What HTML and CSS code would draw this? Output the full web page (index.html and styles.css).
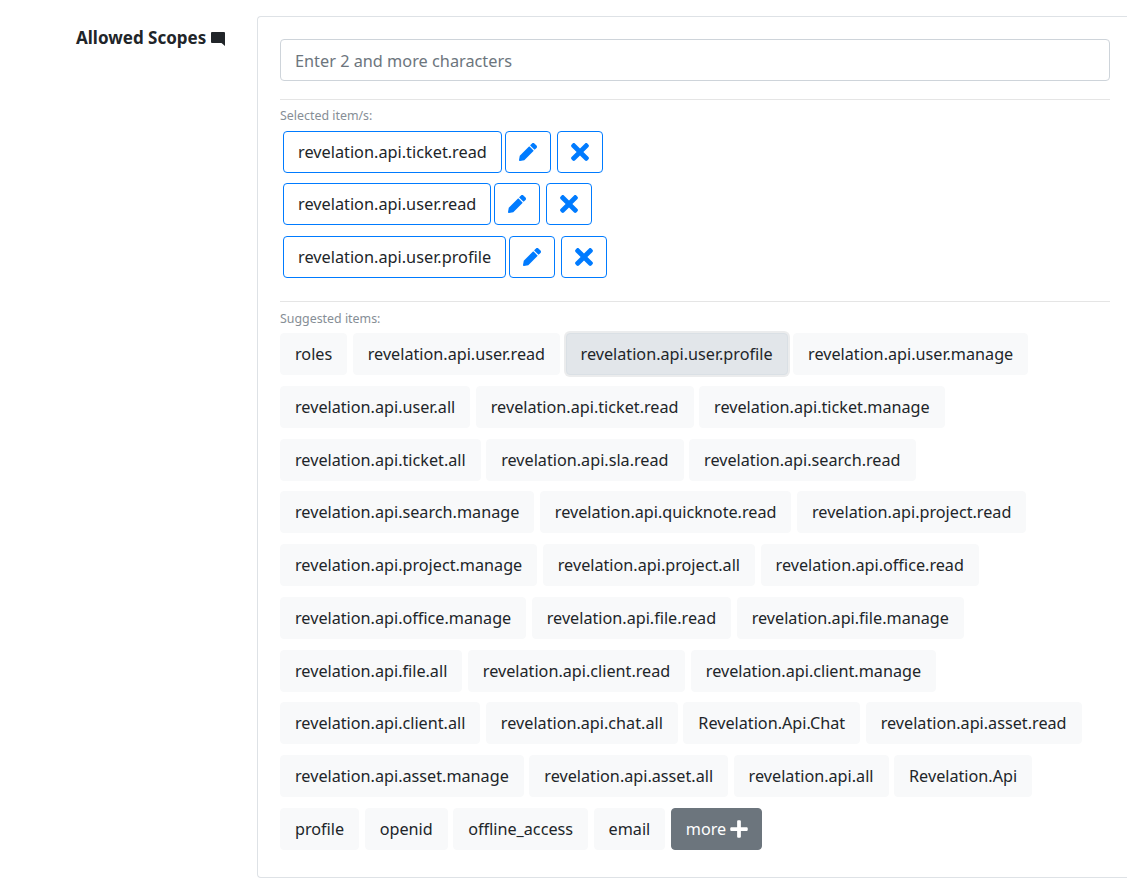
FILE: index.html
```html
<!DOCTYPE html>
<html lang="en">
<head>
<meta charset="utf-8">
<title>Allowed Scopes</title>
<link rel="stylesheet" href="styles.css">
</head>
<body>
<svg class="sprite" aria-hidden="true">
  <symbol id="i-pen" viewBox="0 0 512 512"><path d="M497.9 142.1l-46.1 46.1c-4.7 4.7-12.3 4.7-17 0l-111-111c-4.7-4.7-4.7-12.3 0-17l46.1-46.1c18.7-18.7 49.1-18.7 67.9 0l60.1 60.1c18.8 18.7 18.8 49.1 0 67.9zM284.2 99.8L21.6 362.4.4 483.9c-2.9 16.4 11.4 30.6 27.8 27.8l121.5-21.3 262.6-262.6c4.7-4.7 4.7-12.3 0-17l-111-111c-4.8-4.7-12.4-4.7-17.1 0z"/></symbol>
  <symbol id="i-x" viewBox="0 0 352 512"><path d="M242.72 256l100.07-100.07c12.28-12.28 12.28-32.19 0-44.48l-22.24-22.24c-12.28-12.28-32.19-12.28-44.48 0L176 189.28 75.93 89.21c-12.28-12.28-32.19-12.28-44.48 0L9.21 111.45c-12.28 12.28-12.28 32.19 0 44.48L109.28 256 9.21 356.07c-12.28 12.28-12.28 32.19 0 44.48l22.24 22.24c12.28 12.28 32.2 12.28 44.48 0L176 322.72l100.07 100.07c12.28 12.28 32.2 12.28 44.48 0l22.24-22.24c12.28-12.28 12.28-32.19 0-44.48L242.72 256z"/></symbol>
</svg>
<div class="form-row">
  <div class="label-col">
    <span class="label">Allowed Scopes</span>
    <svg class="comment" viewBox="0 0 14 14"><path d="M1 0h12a1 1 0 0 1 1 1v13l-3.5-3H1a1 1 0 0 1-1-1V1a1 1 0 0 1 1-1z"/></svg>
  </div>
  <div class="panel">
    <input class="search" type="text" placeholder="Enter 2 and more characters">
    <div class="section-first">
      <div class="caption">Selected item/s:</div>
      <div class="selected-list">
        <div class="selected-row">
          <button class="outline name">revelation.api.ticket.read</button>
          <button class="outline icon-btn"><svg class="ic-pen"><use href="#i-pen"/></svg></button>
          <button class="outline icon-btn"><svg class="ic-x"><use href="#i-x"/></svg></button>
        </div>
        <div class="selected-row">
          <button class="outline name">revelation.api.user.read</button>
          <button class="outline icon-btn"><svg class="ic-pen"><use href="#i-pen"/></svg></button>
          <button class="outline icon-btn"><svg class="ic-x"><use href="#i-x"/></svg></button>
        </div>
        <div class="selected-row">
          <button class="outline name">revelation.api.user.profile</button>
          <button class="outline icon-btn"><svg class="ic-pen"><use href="#i-pen"/></svg></button>
          <button class="outline icon-btn"><svg class="ic-x"><use href="#i-x"/></svg></button>
        </div>
      </div>
    </div>
    <div class="section-second">
      <div class="caption">Suggested items:</div>
      <div class="chips">
        <button class="chip">roles</button>
        <button class="chip">revelation.api.user.read</button>
        <button class="chip active">revelation.api.user.profile</button>
        <button class="chip">revelation.api.user.manage</button>
        <button class="chip">revelation.api.user.all</button>
        <button class="chip">revelation.api.ticket.read</button>
        <button class="chip">revelation.api.ticket.manage</button>
        <button class="chip">revelation.api.ticket.all</button>
        <button class="chip">revelation.api.sla.read</button>
        <button class="chip">revelation.api.search.read</button>
        <button class="chip">revelation.api.search.manage</button>
        <button class="chip">revelation.api.quicknote.read</button>
        <button class="chip">revelation.api.project.read</button>
        <button class="chip">revelation.api.project.manage</button>
        <button class="chip">revelation.api.project.all</button>
        <button class="chip">revelation.api.office.read</button>
        <button class="chip">revelation.api.office.manage</button>
        <button class="chip">revelation.api.file.read</button>
        <button class="chip">revelation.api.file.manage</button>
        <button class="chip">revelation.api.file.all</button>
        <button class="chip">revelation.api.client.read</button>
        <button class="chip">revelation.api.client.manage</button>
        <button class="chip">revelation.api.client.all</button>
        <button class="chip">revelation.api.chat.all</button>
        <button class="chip">Revelation.Api.Chat</button>
        <button class="chip">revelation.api.asset.read</button>
        <button class="chip">revelation.api.asset.manage</button>
        <button class="chip">revelation.api.asset.all</button>
        <button class="chip">revelation.api.all</button>
        <button class="chip">Revelation.Api</button>
        <button class="chip">profile</button>
        <button class="chip">openid</button>
        <button class="chip">offline_access</button>
        <button class="chip">email</button>
        <button class="more">more <svg class="plus" viewBox="0 0 448 512"><path d="M416 208H272V64c0-17.67-14.33-32-32-32h-32c-17.67 0-32 14.33-32 32v144H32c-17.67 0-32 14.33-32 32v32c0 17.67 14.33 32 32 32h144v144c0 17.67 14.33 32 32 32h32c17.67 0 32-14.33 32-32V304h144c17.67 0 32-14.33 32-32v-32c0-17.67-14.33-32-32-32z"/></svg></button>
      </div>
    </div>
  </div>
</div>
</body>
</html>
```
FILE: styles.css
```css
* { box-sizing: border-box; }
html, body { margin: 0; height: 888px; overflow: hidden; background: #fff; }
body { font-family: "Noto Sans", "Open Sans", sans-serif; font-size: 16.3px; color: #212529; }
button, input { font: inherit; color: inherit; }
.sprite { display: none; }

.form-row { display: flex; padding-top: 16px; padding-left: 76px; }
.label-col { flex: none; width: 181px; padding-top: 10px; display: flex; align-items: flex-start; gap: 5px; height: 40px; }
.label { font-weight: 700; font-size: 17px; line-height: 24px; white-space: nowrap; }
.comment { width: 14px; height: 14px; margin-top: 6px; fill: #212529; flex: none; }

.panel { flex: none; width: 870px; height: 862px; border: 1px solid #dee2e6; border-right: 0; border-radius: 4px 0 0 4px; padding: 22px 17px 0 22px; }
.search { display: block; width: 830px; height: 42px; border: 1px solid #ced4da; border-radius: 4px; padding: 1px 14px 0; outline: 0; background: #fff; }
.search::placeholder { color: #6c757d; opacity: 1; }

.section-first { margin-top: 18px; border-top: 1px solid #e5e5e5; width: 830px; padding-top: 8px; }
.section-second { margin-top: 23px; border-top: 1px solid #e5e5e5; width: 830px; padding-top: 9px; }
.caption { font-size: 12.4px; line-height: 16px; color: #868e96; }

.selected-list { display: flex; flex-direction: column; gap: 10.25px; padding: 7px 0 0 3px; }
.selected-row { display: flex; gap: 3px; }
.outline { height: 42px; background: #fff; border: 1px solid #007bff; border-radius: 4px; padding: 0 14px; white-space: nowrap; }
.icon-btn { width: 46px; padding: 0; margin-right: 3px; display: flex; align-items: center; justify-content: center; }
.ic-pen { width: 18px; height: 18px; fill: #007bff; }
.ic-x { width: 18px; height: 26px; fill: #007bff; }

.chips { display: flex; flex-wrap: wrap; gap: 10.75px 5.5px; padding-top: 6.5px; font-size: 16.2px; }
.chip { height: 42px; background: #f8f9fa; border: 1px solid #f8f9fa; border-radius: 4px; padding: 0 14px; white-space: nowrap; }
.chip.active { background: #e2e6ea; border-color: #dae0e5; box-shadow: 0 0 0 2px rgba(216, 217, 219, .5); }
.more { height: 42px; background: #6c757d; border: 1px solid #6c757d; border-radius: 4px; padding: 0 13px 0 14px; color: #fff; display: flex; align-items: center; gap: 4px; white-space: nowrap; }
.plus { width: 18px; height: 20px; fill: #fff; }
```
